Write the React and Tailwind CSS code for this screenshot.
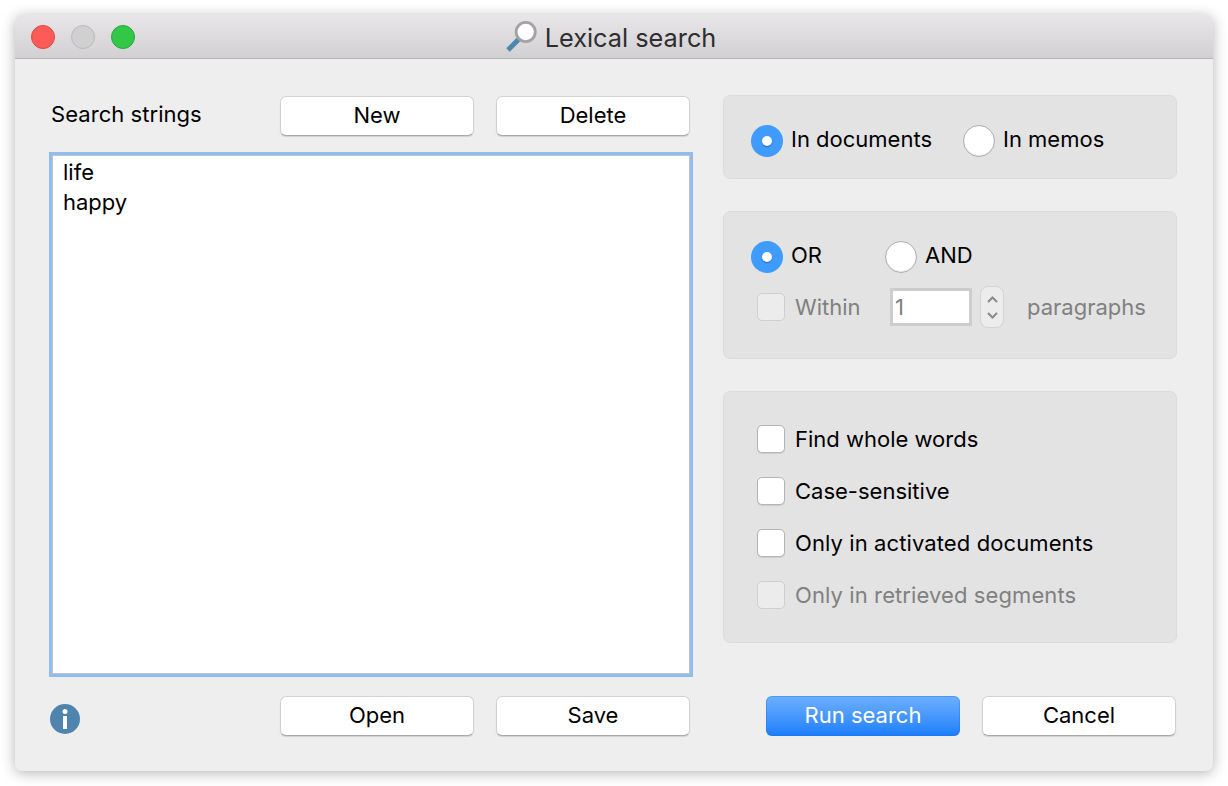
import React from 'react';

const font = 'font-["Inter","Liberation_Sans",sans-serif]';

function Button({ children, primary, className = '' }) {
  if (primary) {
    return (
      <button className={`h-10 w-[194px] rounded-[6px] bg-gradient-to-b from-[#6cb0fd] to-[#1a7efb] pb-[2px] text-[22px] text-white shadow-[inset_0_0_0_1px_rgba(30,110,230,0.35)] ${className}`}>
        {children}
      </button>
    );
  }
  return (
    <button className={`h-10 w-[194px] rounded-[6px] border border-[#d2d2d2] border-b-[#aaaaaa] bg-white pb-[2px] text-[22px] text-black shadow-[0_1px_1px_rgba(0,0,0,0.12)] ${className}`}>
      {children}
    </button>
  );
}

function Radio({ on }) {
  if (on) {
    return (
      <span className="flex h-8 w-8 shrink-0 items-center justify-center rounded-full bg-[#3f9bfd]">
        <span className="h-[10px] w-[10px] rounded-full bg-white shadow-[0_1px_1px_rgba(0,50,140,0.5)]" />
      </span>
    );
  }
  return <span className="h-8 w-8 shrink-0 rounded-full border border-[#ababab] bg-white shadow-[inset_0_-1px_1px_rgba(0,0,0,0.08)]" />;
}

function Check({ label, disabled, wide }) {
  return (
    <div className="flex items-center">
      <span className={`h-7 w-7 shrink-0 rounded-[5px] border ${disabled ? 'border-[#cfcfcf] bg-[#ececec]' : 'border-[#b4b4b4] bg-white shadow-[0_1px_1px_rgba(0,0,0,0.1)]'}`} />
      <span className={`ml-[10px] text-[22px] leading-7 ${wide ? 'tracking-[0.1px]' : ''} ${disabled ? 'text-[#808080]' : 'text-black'}`}>{label}</span>
    </div>
  );
}

function Panel({ className = '', children }) {
  return <div className={`w-[454px] rounded-[7px] border border-[#dcdcdc] bg-[#e3e3e3] ${className}`}>{children}</div>;
}

function Magnifier() {
  return (
    <svg width="33" height="33" viewBox="0 0 33 33" className="mr-[7px]">
      <path d="M14 19 L3 30" stroke="#4f86b0" strokeWidth="5" />
      <circle cx="20.7" cy="12" r="9.6" fill="#ffffff" stroke="#a3a3a3" strokeWidth="2.8" />
    </svg>
  );
}

function InfoIcon() {
  return (
    <svg width="30" height="30" viewBox="0 0 30 30">
      <circle cx="15" cy="15" r="15" fill="#4f84ae" />
      <circle cx="15" cy="7.5" r="2.5" fill="#ffffff" />
      <rect x="13" y="12" width="4" height="13" fill="#ffffff" />
    </svg>
  );
}

export default function App() {
  return (
    <div className={`h-[786px] w-[1228px] overflow-hidden bg-white pl-[15px] pt-[15px] ${font}`}>
      <div className="flex h-[756px] w-[1198px] flex-col overflow-hidden rounded-[7px] bg-[#eeeeee] shadow-[0_2px_14px_rgba(0,0,0,0.3)]">
        {/* Title bar */}
        <div className="relative flex h-[44px] shrink-0 items-center justify-center border-b border-[#b5b5b5] bg-gradient-to-b from-[#e8e6e8] to-[#d2d0d2] pr-[7px]">
          <div className="absolute left-4 top-[10px] flex gap-4">
            <span className="h-6 w-6 rounded-full border border-[#e2463f] bg-[#fc5b57]" />
            <span className="h-6 w-6 rounded-full border border-[#b9b9b9] bg-[#d0d0d0]" />
            <span className="h-6 w-6 rounded-full border border-[#24a938] bg-[#33c748]" />
          </div>
          <div className="flex items-center">
            <Magnifier />
            <span className="mt-[2px] text-[25.3px] text-[#2e2e2e]">Lexical search</span>
          </div>
        </div>

        <div className="flex flex-1">
          {/* Left column */}
          <div className="ml-[34px] flex w-[644px] flex-col pt-[37px]">
            <div className="flex h-10 items-center">
              <span className="mb-1 ml-[2px] w-[229px] text-[22px] tracking-[0.05px] text-black">Search strings</span>
              <Button>New</Button>
              <Button className="ml-[22px]">Delete</Button>
            </div>
            <div className="mt-4 h-[525px] w-[644px] border-[3px] border-[#8fbdf1] bg-white pl-[11px] pt-[2px] text-[22px] leading-[30px] text-black shadow-[inset_0_0_0_1px_#c4c4c4]">
              <div>life</div>
              <div>happy</div>
            </div>
            <div className="mt-[19px] flex h-10 items-center">
              <span className="ml-px mt-[6px] flex w-[230px]"><InfoIcon /></span>
              <Button>Open</Button>
              <Button className="ml-[22px]">Save</Button>
            </div>
          </div>

          {/* Right column */}
          <div className="ml-[30px] flex w-[454px] flex-col pt-[36px]">
            <Panel className="flex h-[84px] items-center pl-[27px] pt-2">
              <Radio on />
              <span className="mb-1 ml-2 w-[172px] text-[22px] text-black">In documents</span>
              <Radio />
              <span className="mb-1 ml-2 text-[22px] text-black">In memos</span>
            </Panel>

            <Panel className="mt-8 h-[148px] pl-[27px] pt-[27px]">
              <div className="flex items-center">
                <Radio on />
                <span className="mb-[2px] ml-2 w-[94px] text-[22px] text-black">OR</span>
                <Radio />
                <span className="mb-[2px] ml-2 text-[22px] text-black">AND</span>
              </div>
              <div className="ml-[6px] mt-3 flex items-center">
                <span className="h-7 w-7 shrink-0 rounded-[5px] border border-[#cfcfcf] bg-[#ececec]" />
                <span className="ml-[10px] w-[95px] text-[22px] text-[#808080]">Within</span>
                <span className="flex h-[38px] w-[82px] items-center border-[3px] border-[#cdcdcd] bg-white pl-[2px] text-[22px] text-[#808080]">1</span>
                <span className="ml-2 flex h-[42px] w-6 flex-col items-center justify-center gap-[9px] rounded-[8px] border border-[#d4d4d4] bg-[#ececec]">
                  <svg width="11" height="7" viewBox="0 0 11 7" fill="none" stroke="#8a8a8a" strokeWidth="2"><path d="M1 6 L5.5 1.5 L10 6" /></svg>
                  <svg width="11" height="7" viewBox="0 0 11 7" fill="none" stroke="#8a8a8a" strokeWidth="2"><path d="M1 1 L5.5 5.5 L10 1" /></svg>
                </span>
                <span className="ml-[23px] text-[22px] text-[#808080]">paragraphs</span>
              </div>
            </Panel>

            <Panel className="mt-8 flex h-[252px] flex-col gap-6 pl-[33px] pt-[33px]">
              <Check label="Find whole words" />
              <Check label="Case-sensitive" />
              <Check label="Only in activated documents" wide />
              <Check label="Only in retrieved segments" disabled wide />
            </Panel>

            <div className="mt-[53px] flex">
              <Button primary className="ml-[43px]">Run search</Button>
              <Button className="ml-[22px]">Cancel</Button>
            </div>
          </div>
        </div>
      </div>
    </div>
  );
}
